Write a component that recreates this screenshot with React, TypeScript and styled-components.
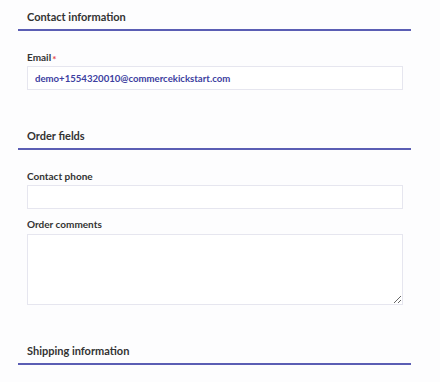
import styled, { createGlobalStyle } from "styled-components";

const GlobalStyle = createGlobalStyle`
  body {
    margin: 0;
    background: #fdfdfe;
    font-family: "Lato", "Open Sans", sans-serif;
    color: #333;
  }
`;

interface FieldProps {
  label: string;
  required?: boolean;
  value?: string;
  multiline?: boolean;
}

function Field(props: FieldProps): JSX.Element {
  const { label, required, value, multiline } = props;
  return (
    <FieldWrap>
      <Label>
        {label}
        {required && <Star>*</Star>}
      </Label>
      {multiline ? <TextArea /> : <Input defaultValue={value} />}
    </FieldWrap>
  );
}

export default function App(): JSX.Element {
  return (
    <>
      <GlobalStyle />
      <Page>
        <Section>
          <Heading>Contact information</Heading>
          <Body>
            <Field
              label="Email"
              required
              value="demo+1554320010@commercekickstart.com"
            />
          </Body>
        </Section>
        <Section>
          <Heading>Order fields</Heading>
          <Body>
            <Field label="Contact phone" />
            <Field label="Order comments" multiline />
          </Body>
        </Section>
        <Section>
          <Heading>Shipping information</Heading>
        </Section>
      </Page>
    </>
  );
}

const Page = styled.div`
  display: flex;
  flex-direction: column;
  gap: 29px;
  width: 393px;
  padding-left: 18px;
`;

const Section = styled.section`
  display: flex;
  flex-direction: column;
`;

const Heading = styled.h2`
  margin: 0;
  padding: 9px 9px 4px;
  font-size: 11px;
  line-height: 16px;
  font-weight: 700;
  color: #333;
  border-bottom: 2px solid #5b5eb4;
`;

const Body = styled.div`
  display: flex;
  flex-direction: column;
  gap: 8px;
  padding: 19px 8px 0 9px;
`;

const FieldWrap = styled.div`
  display: flex;
  flex-direction: column;
`;

const Label = styled.label`
  font-size: 10px;
  line-height: 14px;
  font-weight: 700;
  color: #333;
  margin-bottom: 2px;
`;

const Star = styled.span`
  color: #e5484d;
  font-size: 10px;
  margin-left: 1px;
  position: relative;
  top: 2px;
`;

const Input = styled.input`
  box-sizing: border-box;
  height: 24px;
  width: 100%;
  border: 1px solid #e6e6ef;
  background: #fff;
  padding: 0 7px;
  font-family: "Lato", sans-serif;
  font-size: 9.6px;
  font-weight: 700;
  color: #3d40a0;
  outline: none;
`;

const TextArea = styled.textarea`
  box-sizing: border-box;
  height: 71px;
  width: 100%;
  border: 1px solid #e6e6ef;
  background: #fff;
  margin: 1px 0 0;
  display: block;
  outline: none;
`;
